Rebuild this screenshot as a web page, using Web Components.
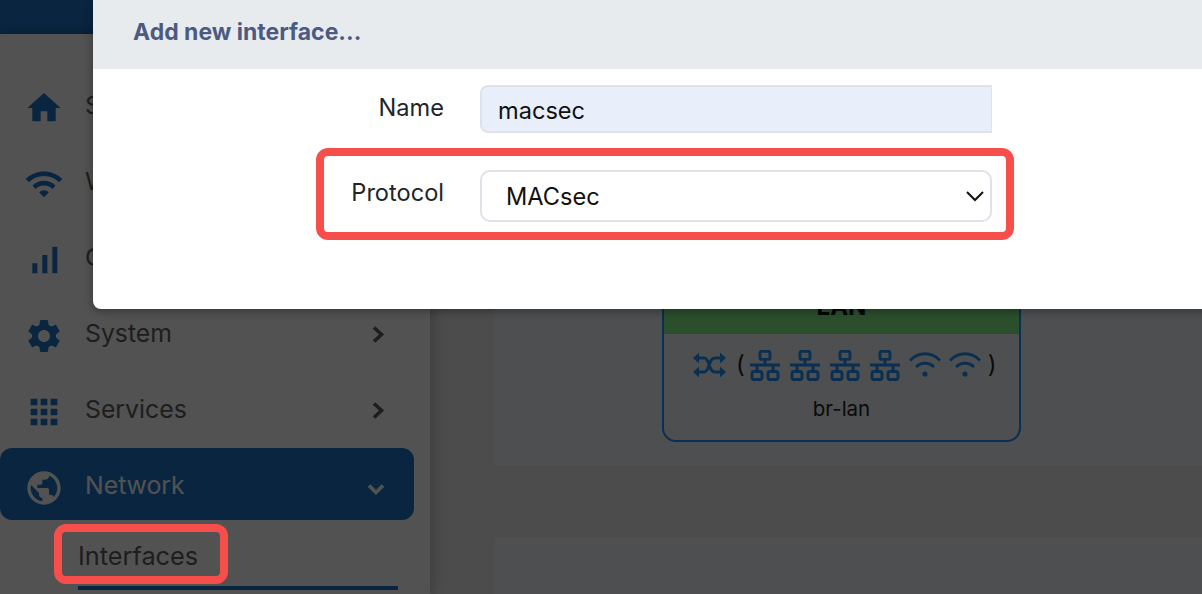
<!DOCTYPE html>
<html lang="en">
<head>
<meta charset="utf-8">
<title>Add new interface</title>
<style>
    html, body { margin: 0; height: 100%; overflow: hidden; }
    body { font-family: Inter, "Liberation Sans", sans-serif; }
</style>
</head>
<body>
<app-shell>
    <side-nav slot="side">
        <nav-item icon="home">S</nav-item>
        <nav-item icon="wifi">W</nav-item>
        <nav-item icon="bars">G</nav-item>
        <nav-item icon="settings" arrow="right">System</nav-item>
        <nav-item icon="apps" arrow="right">Services</nav-item>
        <nav-item icon="globe" arrow="down" active>Network</nav-item>
        <sub-item>Interfaces</sub-item>
    </side-nav>
    <main-area slot="main">
        <iface-card title="LAN" device="br-lan"></iface-card>
    </main-area>
    <add-dialog slot="dialog" heading="Add new interface...">
        <form-row label="Name"><text-box>macsec</text-box></form-row>
        <form-row label="Protocol" marked><select-box>MACsec</select-box></form-row>
    </add-dialog>
    <red-box slot="dialog" inset="524px 974px 10px 54px"></red-box>
</app-shell>

<script>
const ICONS = {
    home: 'M10 20v-6h4v6h5v-8h3L12 3 2 12h3v8z',
    wifi: 'M1 9l2 2c4.97-4.97 13.03-4.97 18 0l2-2C16.93 2.93 7.08 2.93 1 9zm8 8l3 3 3-3c-1.65-1.66-4.34-1.66-6 0zm-4-4l2 2c2.76-2.76 7.24-2.76 10 0l2-2C15.14 9.14 8.87 9.14 5 13z',
    bars: 'M17 4h3v16h-3V4zM5 14h3v6H5v-6zm6-5h3v11h-3V9z',
    settings: 'M19.14 12.94c.04-.3.06-.61.06-.94 0-.32-.02-.64-.07-.94l2.03-1.58c.18-.14.23-.41.12-.61l-1.92-3.32c-.12-.22-.37-.29-.59-.22l-2.39.96c-.5-.38-1.03-.7-1.62-.94l-.36-2.54c-.04-.24-.24-.41-.48-.41h-3.84c-.24 0-.43.17-.47.41l-.36 2.54c-.59.24-1.13.57-1.62.94l-2.39-.96c-.22-.08-.47 0-.59.22L2.74 8.87c-.12.21-.08.47.12.61l2.03 1.58c-.05.3-.09.63-.09.94s.02.64.07.94l-2.03 1.58c-.18.14-.23.41-.12.61l1.92 3.32c.12.22.37.29.59.22l2.39-.96c.5.38 1.03.7 1.62.94l.36 2.54c.05.24.24.41.48.41h3.84c.24 0 .44-.17.47-.41l.36-2.54c.59-.24 1.13-.56 1.62-.94l2.39.96c.22.08.47 0 .59-.22l1.92-3.32c.12-.22.07-.47-.12-.61l-2.01-1.58zM12 15.6c-1.98 0-3.6-1.62-3.6-3.6s1.62-3.6 3.6-3.6 3.6 1.62 3.6 3.6-1.62 3.6-3.6 3.6z',
    apps: 'M4 8h4V4H4v4zm6 12h4v-4h-4v4zm-6 0h4v-4H4v4zm0-6h4v-4H4v4zm6 0h4v-4h-4v4zm6-10v4h4V4h-4zm-6 4h4V4h-4v4zm6 6h4v-4h-4v4zm0 6h4v-4h-4v4z',
    globe: 'M12 2C6.48 2 2 6.48 2 12s4.48 10 10 10 10-4.48 10-10S17.52 2 12 2zm-1 17.93c-3.95-.49-7-3.85-7-7.93 0-.62.08-1.21.21-1.79L9 15v1c0 1.1.9 2 2 2v1.93zm6.9-2.54c-.26-.81-1-1.39-1.9-1.39h-1v-3c0-.55-.45-1-1-1H8v-2h2c.55 0 1-.45 1-1V7h2c1.1 0 2-.9 2-2v-.41c2.93 1.19 5 4.06 5 7.41 0 2.08-.8 3.97-2.1 5.39z'
}

class AppShell extends HTMLElement {
    constructor() {
        super()
        this.attachShadow({ mode: "open" })
        this.shadowRoot.innerHTML = `
            <style>
                :host { display: block; position: relative; width: 1202px; height: 594px; overflow: hidden; }
                .top { height: 34px; background: #1d75c8; }
                .body { display: flex; height: 560px; }
                .shade { position: absolute; z-index: 2; inset: 0; background: rgba(0, 0, 0, .68); }
            </style>
            <div class="top"></div>
            <div class="body">
                <slot name="side"></slot>
                <slot name="main"></slot>
            </div>
            <div class="shade"></div>
            <slot name="dialog"></slot>
        `
    }
}

class SideNav extends HTMLElement {
    constructor() {
        super()
        this.attachShadow({ mode: "open" })
        this.shadowRoot.innerHTML = `
            <style>
                :host {
                    display: flex; flex-direction: column; gap: 4px;
                    position: relative; z-index: 1;
                    box-sizing: border-box; flex: none; width: 430px; padding: 34px 16px 0 0;
                    background: #fff; box-shadow: 0 0 14px rgba(0, 0, 0, .3);
                }
            </style>
            <slot></slot>
        `
    }
}

class NavItem extends HTMLElement {
    constructor() {
        super()
        this.attachShadow({ mode: "open" })
        const arrows = {
            right: '<svg class="arrow" width="16" height="18" viewBox="0 0 16 18"><path d="M3 2.5 L10.5 9.5 L3 16.5" fill="none" stroke="currentColor" stroke-width="3.6"/></svg>',
            down: '<svg class="arrow down" width="18" height="14" viewBox="0 0 18 14"><path d="M2 3.5 L9 10.5 L16 3.5" fill="none" stroke="currentColor" stroke-width="3.6"/></svg>'
        }
        this.shadowRoot.innerHTML = `
            <style>
                :host {
                    display: flex; align-items: center; height: 72px;
                    box-sizing: border-box; padding: 0 27px 0 24px;
                    border-radius: 12px;
                    font-size: 24.8px; color: #5e5e5e; --icon: #1d75c8;
                }
                :host([active]) { background: #1d75c8; color: #fff; --icon: #fff; }
                .icon { flex: none; width: 40px; height: 40px; margin: 8px 21px 0 0; fill: var(--icon); }
                .label { flex: 1; padding-top: 2px; }
                .arrow { flex: none; margin-top: 3px; }
                .down { margin: 9px 2px 0 0; }
            </style>
            <svg class="icon" viewBox="0 0 24 24"><path d="${ICONS[this.getAttribute('icon')]}"/></svg>
            <span class="label"><slot></slot></span>
            ${arrows[this.getAttribute('arrow')] || ''}
        `
    }
}

class SubItem extends HTMLElement {
    constructor() {
        super()
        this.attachShadow({ mode: "open" })
        this.shadowRoot.innerHTML = `
            <style>
                :host {
                    display: block; box-sizing: border-box;
                    height: 66px; margin-left: 78px; padding-top: 17px; width: 320px;
                    font-size: 25.3px; line-height: 30px; color: #5e5e5e;
                    border-bottom: 4px solid #1d75c8;
                }
            </style>
            <slot></slot>
        `
    }
}

class RedBox extends HTMLElement {
    constructor() {
        super()
        this.attachShadow({ mode: "open" })
        this.shadowRoot.innerHTML = `
            <style>
                :host {
                    display: block; position: absolute; z-index: 3; inset: ${this.getAttribute('inset')};
                    box-sizing: border-box; border: 8px solid #f64e4a; border-radius: 12px;
                    pointer-events: none;
                }
            </style>
        `
    }
}

class MainArea extends HTMLElement {
    constructor() {
        super()
        this.attachShadow({ mode: "open" })
        this.shadowRoot.innerHTML = `
            <style>
                :host { display: block; flex: 1; padding-left: 64px; background: #ebebeb; }
                .section { background: #f3f6fb; }
                .first { height: 431px; box-sizing: border-box; padding: 226px 0 0 169px; margin-bottom: 72px; }
                .second { height: 60px; }
            </style>
            <div class="section first"><slot></slot></div>
            <div class="section second"></div>
        `
    }
}

class IfaceCard extends HTMLElement {
    constructor() {
        super()
        this.attachShadow({ mode: "open" })
        const net = `<svg class="net" width="32" height="31" viewBox="0 0 32 31" fill="none" stroke="currentColor" stroke-width="2.9">
                <rect x="11" y="1.4" width="10" height="8" rx="2"/>
                <path d="M16 9.5V15M1 15H31M8 15V21M24 15V21"/>
                <rect x="3" y="21.5" width="10" height="8" rx="2"/>
                <rect x="19" y="21.5" width="10" height="8" rx="2"/>
            </svg>`
        const wifi = `<svg class="net" width="32" height="26" viewBox="0 0 32 26" fill="none" stroke="currentColor" stroke-width="2.8">
                <path d="M1 8.5C9.5 -.5 22.5 -.5 31 8.5"/>
                <path d="M7 15C12 10 20 10 25 15"/>
                <circle cx="16" cy="22" r="2.6" fill="currentColor" stroke="none"/>
            </svg>`
        this.shadowRoot.innerHTML = `
            <style>
                :host {
                    display: block; box-sizing: border-box; width: 359px; height: 182px;
                    margin-left: -1px;
                    border: 2px solid #1f92fb; border-radius: 14px; overflow: hidden;
                    font-size: 20.5px; color: #222; text-align: center;
                }
                .head { height: 72px; background: #86f689; font-weight: 700; font-size: 24px; line-height: 90px; color: #111; }
                .ports { display: flex; align-items: center; gap: 8px; height: 62px; padding-left: 29px; color: #1f92fb; }
                .ports span { color: #222; font-size: 24px; margin-top: -2px; }
                .shuffle { margin-right: 3px; }
                .open { margin: 0 -4px 0 -1px; }
                .close { margin-left: -1px; }
                .device { line-height: 24px; margin-top: 1px; }
            </style>
            <div class="head">${this.getAttribute('title')}</div>
            <div class="ports">
                <svg class="shuffle" width="33" height="26" viewBox="0 0 33 26" fill="none" stroke="currentColor" stroke-width="3">
                    <path d="M5 6H11C17 6 15 20 22 20H28M5 20H11C17 20 15 6 22 6H28"/>
                    <path d="M6 0.5V11.5L0 6ZM27 0.5V11.5L33 6ZM6 14.5V25.5L0 20ZM27 14.5V25.5L33 20Z" fill="currentColor" stroke="none"/>
                </svg>
                <span class="open">(</span>
                ${net}${net}${net}${net}${wifi}${wifi}
                <span class="close">)</span>
            </div>
            <div class="device">${this.getAttribute('device')}</div>
        `
    }
}

class AddDialog extends HTMLElement {
    constructor() {
        super()
        this.attachShadow({ mode: "open" })
        this.shadowRoot.innerHTML = `
            <style>
                :host {
                    display: block; position: absolute; z-index: 3; left: 93px; top: 0; width: 1200px; height: 309px;
                    background: #fff; border-radius: 0 0 8px 8px; box-shadow: 0 2px 10px rgba(0, 0, 0, .35);
                    font-size: 23.6px; color: #212529;
                }
                .head {
                    box-sizing: border-box; height: 69px; padding: 17px 40px; background: #e8ebee;
                    font-size: 23px; line-height: 30px; font-weight: 700; color: #4c5a82;
                }
                .body { display: flex; flex-direction: column; gap: 37px; padding-top: 16px; }
            </style>
            <div class="head">${this.getAttribute('heading')}</div>
            <div class="body"><slot></slot></div>
        `
    }
}

class FormRow extends HTMLElement {
    constructor() {
        super()
        this.attachShadow({ mode: "open" })
        this.shadowRoot.innerHTML = `
            <style>
                :host { display: flex; position: relative; align-items: flex-start; width: 899px; gap: 36px; }
                label { flex: none; width: 351px; text-align: right; line-height: 30px; padding-top: 8px; }
            </style>
            <label>${this.getAttribute('label')}</label>
            <slot></slot>
            ${this.hasAttribute('marked') ? '<red-box inset="-22px -22px -18px 223px"></red-box>' : ''}
        `
    }
}

class TextBox extends HTMLElement {
    constructor() {
        super()
        this.attachShadow({ mode: "open" })
        this.shadowRoot.innerHTML = `
            <style>
                :host {
                    display: block; flex: 1; box-sizing: border-box; height: 48px; padding: 1px 16px 0;
                    background: #e8effb; border: 2px solid #dee2e9; border-right-width: 1px;
                    border-radius: 8px 0 0 8px; line-height: 46px; color: #111;
                }
            </style>
            <slot></slot>
        `
    }
}

class SelectBox extends HTMLElement {
    constructor() {
        super()
        this.attachShadow({ mode: "open" })
        this.shadowRoot.innerHTML = `
            <style>
                :host {
                    display: flex; flex: 1; align-items: center; justify-content: space-between;
                    box-sizing: border-box; height: 52px; padding: 1px 5px 0 24px;
                    background: #fff; border: 2px solid #dfe2e7; border-radius: 10px; color: #111;
                }
                svg { flex: none; margin-top: -1px; }
            </style>
            <slot></slot>
            <svg width="20" height="12" viewBox="0 0 20 12"><path d="M2 2 L10 10 L18 2" fill="none" stroke="#111" stroke-width="2"/></svg>
        `
    }
}

customElements.define('red-box', RedBox)
customElements.define('app-shell', AppShell)
customElements.define('side-nav', SideNav)
customElements.define('nav-item', NavItem)
customElements.define('sub-item', SubItem)
customElements.define('main-area', MainArea)
customElements.define('iface-card', IfaceCard)
customElements.define('add-dialog', AddDialog)
customElements.define('form-row', FormRow)
customElements.define('text-box', TextBox)
customElements.define('select-box', SelectBox)
</script>
</body>
</html>
